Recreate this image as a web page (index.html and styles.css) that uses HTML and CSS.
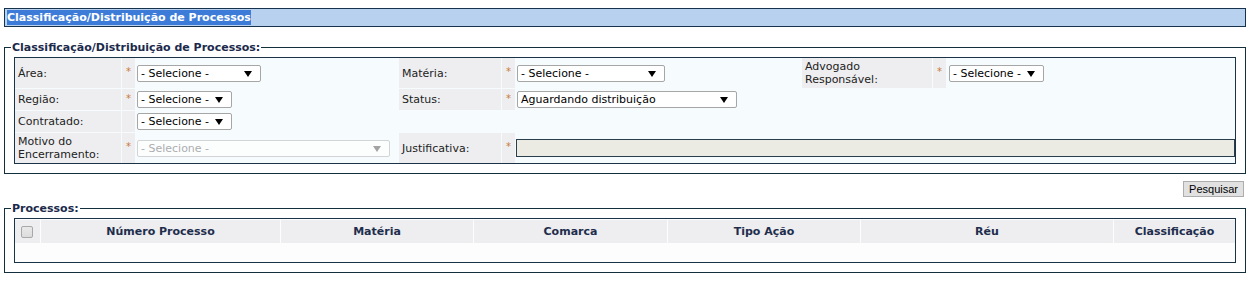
FILE: index.html
```html
<!DOCTYPE html>
<html lang="pt-BR">
<head>
    <meta charset="UTF-8">
    <meta name="viewport" content="width=device-width, initial-scale=1.0">
    <title>Classificação/Distribuição de Processos</title>
    <link rel="stylesheet" href="styles.css">
</head>
<body>
    <div class="page">
        <div class="page-title">
            <span class="page-title-text">Classificação/Distribuição de Processos</span>
        </div>

        <fieldset class="box box-filters">
            <legend>Classificação/Distribuição de Processos:</legend>
            <div class="box-inner box-inner-blue">
                <table class="form-table">
                    <colgroup>
                        <col style="width:106px">
                        <col style="width:13px">
                        <col style="width:262px">
                        <col style="width:102px">
                        <col style="width:13px">
                        <col style="width:285px">
                        <col style="width:130px">
                        <col style="width:13px">
                        <col>
                    </colgroup>
                    <tr class="row-tall">
                        <td class="lbl">Área:</td>
                        <td class="req">*</td>
                        <td class="val">
                            <span class="select-wrap"><select class="sel sel-md"><option>- Selecione -</option></select></span>
                        </td>
                        <td class="lbl">Matéria:</td>
                        <td class="req">*</td>
                        <td class="val">
                            <span class="select-wrap"><select class="sel sel-mat"><option>- Selecione -</option></select></span>
                        </td>
                        <td class="lbl">Advogado Responsável:</td>
                        <td class="req">*</td>
                        <td class="val val-adv">
                            <span class="select-wrap"><select class="sel sel-sm"><option>- Selecione -</option></select></span>
                        </td>
                    </tr>
                    <tr>
                        <td class="lbl">Região:</td>
                        <td class="req">*</td>
                        <td class="val">
                            <span class="select-wrap"><select class="sel sel-sm"><option>- Selecione -</option></select></span>
                        </td>
                        <td class="lbl">Status:</td>
                        <td class="req">*</td>
                        <td class="val">
                            <span class="select-wrap"><select class="sel sel-status"><option>Aguardando distribuição</option></select></span>
                        </td>
                        <td colspan="3"></td>
                    </tr>
                    <tr>
                        <td class="lbl">Contratado:</td>
                        <td class="req"></td>
                        <td class="val">
                            <span class="select-wrap"><select class="sel sel-sm"><option>- Selecione -</option></select></span>
                        </td>
                        <td colspan="6"></td>
                    </tr>
                    <tr class="row-tall">
                        <td class="lbl">Motivo do Encerramento:</td>
                        <td class="req">*</td>
                        <td class="val">
                            <span class="select-wrap is-disabled"><select class="sel sel-wide" disabled><option>- Selecione -</option></select></span>
                        </td>
                        <td class="lbl">Justificativa:</td>
                        <td class="req">*</td>
                        <td class="val val-just" colspan="4">
                            <input type="text" class="text-input" disabled>
                        </td>
                    </tr>
                </table>
            </div>
        </fieldset>

        <div class="actions">
            <button type="button" class="btn">Pesquisar</button>
        </div>

        <fieldset class="box box-results">
            <legend>Processos:</legend>
            <div class="box-inner">
                <table class="grid">
                    <colgroup>
                        <col style="width:25px">
                        <col style="width:239px">
                        <col style="width:192px">
                        <col style="width:193px">
                        <col style="width:192px">
                        <col style="width:252px">
                        <col>
                    </colgroup>
                    <thead>
                        <tr>
                            <th class="chk-col"><input type="checkbox" class="chk"></th>
                            <th>Número Processo</th>
                            <th>Matéria</th>
                            <th>Comarca</th>
                            <th>Tipo Ação</th>
                            <th>Réu</th>
                            <th>Classificação</th>
                        </tr>
                    </thead>
                    <tbody>
                        <tr class="empty-row"><td colspan="7"></td></tr>
                    </tbody>
                </table>
            </div>
        </fieldset>
    </div>
</body>
</html>
```

FILE: styles.css
```css
* {
    box-sizing: border-box;
}

body {
    margin: 0;
    background: #fff;
    font-family: "DejaVu Sans", Verdana, sans-serif;
    font-size: 11px;
    color: #222;
}

.page {
    margin: 0 6px 0 4px;
    padding-top: 8px;
}

/* barra de título */
.page-title {
    height: 19px;
    border: 1px solid #17324d;
    background: #b8d1ee;
    padding: 0 0 0 2px;
    line-height: 17px;
}

.page-title-text {
    background: #3c7cd8;
    color: #fff;
    font-weight: bold;
    padding: 1px 0;
}

/* caixas */
.box {
    margin: 14px 0 0 0;
    border: 1px solid #12303b;
    padding: 3px 9px 9px 9px;
    min-width: 0;
}

.box legend {
    font-weight: bold;
    color: #1b2a4b;
    padding: 0 1px;
    margin-left: -3px;
    line-height: 13px;
}

.box-results {
    margin-top: 5px;
}

.box-inner {
    border: 1px solid #1b3346;
    background: #fdfdfd;
}

.box-inner-blue {
    background: #f6fcfe;
}

/* formulário */
.form-table {
    table-layout: fixed;
    border-collapse: separate;
    border-spacing: 1px;
    margin: -1px -1px;
    width: calc(100% + 2px);
}

.form-table td {
    padding: 0;
    height: 21px;
    vertical-align: middle;
}

.form-table .row-tall td {
    height: 30px;
}

.form-table .lbl {
    background: #eeeef0;
    padding: 2px 3px;
    line-height: 13px;
    color: #222;
}

.form-table .req {
    background: #eeeef0;
    color: #c97a3c;
    font-size: 10px;
    text-align: center;
    vertical-align: middle;
    padding-bottom: 3px;
}

.form-table .val {
    padding: 0 0 0 1px;
}

.form-table .val-adv {
    padding-left: 2px;
}

.form-table .val-just {
    padding-left: 0;
}

.select-wrap {
    position: relative;
    display: inline-block;
    vertical-align: middle;
}

.select-wrap::after {
    content: "";
    position: absolute;
    right: 9px;
    top: 6px;
    border-left: 4px solid transparent;
    border-right: 4px solid transparent;
    border-top: 6px solid #000;
    pointer-events: none;
}

.select-wrap.is-disabled::after {
    border-top-color: #a3a3a3;
}

.sel {
    -webkit-appearance: none;
    appearance: none;
    display: block;
    height: 17px;
    margin: 0;
    padding: 0 3px;
    border: 1px solid #a6a6a6;
    border-radius: 2px;
    background: #fff;
    font-family: "DejaVu Sans", Verdana, sans-serif;
    font-size: 11px;
    color: #000;
    line-height: 15px;
}

.sel:disabled {
    color: #8d8d8d;
    border-color: #c4c4c4;
    background: #fff;
}

.sel-sm { width: 95px; }
.sel-md { width: 124px; }
.sel-mat { width: 148px; }
.sel-status { width: 220px; }
.sel-wide { width: 253px; }

.text-input {
    display: block;
    width: 100%;
    height: 18px;
    margin: 0;
    border: 1px solid #2a3d4c;
    background: #ebebe4;
    padding: 0 2px;
}

/* ações */
.actions {
    text-align: right;
    padding: 7px 2px 0 0;
}

.btn {
    height: 16px;
    margin: 0;
    padding: 0 5px;
    border: 1px solid #adadad;
    background: #e1e1e1;
    font-family: "Liberation Sans", Arial, sans-serif;
    font-size: 11px;
    line-height: 14px;
    color: #000;
    border-radius: 0;
    vertical-align: top;
}

/* grid de processos */
.grid {
    table-layout: fixed;
    border-collapse: separate;
    border-spacing: 1px;
    margin: 0 -1px;
    width: calc(100% + 2px);
}

.grid th {
    height: 23px;
    background: #eeeef0;
    color: #1f2d4d;
    font-weight: bold;
    text-align: center;
    padding: 0;
}

.grid .chk-col {
    text-align: left;
    padding-left: 6px;
}

.chk {
    -webkit-appearance: none;
    appearance: none;
    display: block;
    width: 12px;
    height: 12px;
    margin: 0;
    border: 1px solid #a8a8a8;
    border-radius: 2px;
    background: linear-gradient(#e9e9e9, #dcdcdc);
}

.empty-row td {
    height: 17px;
    padding: 0;
}
```
